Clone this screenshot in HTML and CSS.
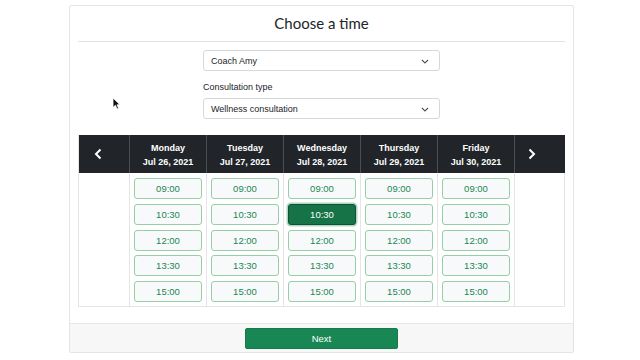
FILE: index.html
```html
<!DOCTYPE html>
<html>
<head>
<meta charset="utf-8">
<link rel="stylesheet" href="styles.css">
</head>
<body>
<div class="card">
  <div class="card-body">
    <h1 class="title">Choose a time</h1>
    <div class="form">
      <div class="select"><span>Coach Amy</span><svg class="chev" width="8" height="5" viewBox="0 0 8 5"><path d="M1 1 L4 4 L7 1" fill="none" stroke="#555" stroke-width="1.1"/></svg></div>
      <label class="label">Consultation type</label>
      <div class="select"><span>Wellness consultation</span><svg class="chev" width="8" height="5" viewBox="0 0 8 5"><path d="M1 1 L4 4 L7 1" fill="none" stroke="#555" stroke-width="1.1"/></svg></div>
    </div>
    <div class="cal">
      <div class="head nav"><svg width="8" height="12" viewBox="0 0 8 12"><path d="M6.5 1.5 L2 6 L6.5 10.5" fill="none" stroke="#fff" stroke-width="2"/></svg></div>
      <div class="head day"><b>Monday</b><b>Jul 26, 2021</b></div>
      <div class="head day"><b>Tuesday</b><b>Jul 27, 2021</b></div>
      <div class="head day"><b>Wednesday</b><b>Jul 28, 2021</b></div>
      <div class="head day"><b>Thursday</b><b>Jul 29, 2021</b></div>
      <div class="head day"><b>Friday</b><b>Jul 30, 2021</b></div>
      <div class="head nav next"><svg width="8" height="12" viewBox="0 0 8 12"><path d="M1.5 1.5 L6 6 L1.5 10.5" fill="none" stroke="#fff" stroke-width="2"/></svg></div>

      <div class="col empty"></div>
      <div class="col"><button class="slot">09:00</button><button class="slot">10:30</button><button class="slot">12:00</button><button class="slot">13:30</button><button class="slot">15:00</button></div>
      <div class="col"><button class="slot">09:00</button><button class="slot">10:30</button><button class="slot">12:00</button><button class="slot">13:30</button><button class="slot">15:00</button></div>
      <div class="col"><button class="slot">09:00</button><button class="slot active">10:30</button><button class="slot">12:00</button><button class="slot">13:30</button><button class="slot">15:00</button></div>
      <div class="col"><button class="slot">09:00</button><button class="slot">10:30</button><button class="slot">12:00</button><button class="slot">13:30</button><button class="slot">15:00</button></div>
      <div class="col"><button class="slot">09:00</button><button class="slot">10:30</button><button class="slot">12:00</button><button class="slot">13:30</button><button class="slot">15:00</button></div>
      <div class="col empty"></div>
    </div>
  </div>
  <div class="card-footer">
    <button class="next-btn">Next</button>
  </div>
</div>
<svg class="cursor" width="9" height="13" viewBox="0 0 9 13"><path d="M1 1 L1 10.5 L3.4 8.3 L5 12 L6.6 11.3 L5 7.8 L8 7.8 Z" fill="#111" stroke="#fff" stroke-width="0.8"/></svg>
</body>
</html>
```
FILE: styles.css
```css
* { box-sizing: border-box; }
body {
  margin: 0;
  background: #fff;
  font-family: "Liberation Sans", Arial, sans-serif;
  color: #212529;
  position: relative;
  width: 640px;
  height: 360px;
  overflow: hidden;
}
.card {
  margin: 5px 0 0 69px;
  width: 505px;
  border: 1px solid #e4e4e4;
  border-radius: 2px;
  background: #fff;
}
.card-body {
  padding: 0 8px 16px;
}
.title {
  margin: 0;
  height: 36px;
  line-height: 35px;
  border-bottom: 1px solid #e2e2e2;
  text-align: center;
  font-family: Lato, "Open Sans", sans-serif;
  font-weight: 400;
  font-size: 15px;
  color: #212529;
}
.form {
  width: 237px;
  margin: 8px auto 0;
  display: flex;
  flex-direction: column;
}
.select {
  height: 21px;
  border: 1px solid #d6d9dc;
  border-radius: 3px;
  padding: 0 10px 0 7px;
  display: flex;
  align-items: center;
  justify-content: space-between;
  font-size: 9px;
  color: #212529;
}
.chev { margin-top: 1px; }
.label {
  font-size: 9px;
  margin: 11px 0 5px;
  line-height: 11px;
}
.cal {
  margin-top: 16px;
  display: grid;
  grid-template-columns: 50px repeat(5, 77px) 51px;
  border-left: 1px solid #e3e5e7;
  border-right: 1px solid #e3e5e7;
  border-bottom: 1px solid #e3e5e7;
}
.head {
  height: 38px;
  background: #212529;
  color: #fff;
}
.day {
  border-left: 1.5px solid #4a4f54;
  display: flex;
  flex-direction: column;
  align-items: center;
  padding-top: 6px;
  font-size: 9px;
  line-height: 14px;
}
.nav {
  display: flex;
  align-items: center;
  justify-content: flex-start;
  padding-left: 15px;
}
.next { border-left: 1.5px solid #4a4f54; padding-left: 13px; }
.col {
  border-left: 1px solid #e3e5e7;
  padding: 5px 4px 4px;
  display: flex;
  flex-direction: column;
  gap: 4.75px;
}
.cal > .col.empty:nth-child(8) { border-left: none; }
.slot {
  height: 21px;
  width: 100%;
  border: 1px solid #96cfa6;
  border-radius: 3px;
  background: #f8f9fa;
  color: #198754;
  font-family: "Liberation Sans", Arial, sans-serif;
  font-size: 9.5px;
  padding: 0;
}
.slot.active {
  background: #157347;
  color: #fff;
  border-color: #0f5132;
  box-shadow: 0 0 0 1.5px rgba(25, 135, 84, 0.35);
}
.card-footer {
  border-top: 1px solid #e6e6e6;
  background: #f7f7f7;
  height: 29px;
  display: flex;
  justify-content: center;
  padding-top: 4px;
}
.next-btn {
  width: 153px;
  height: 21px;
  border: 1px solid #167a4c;
  border-radius: 2px;
  background: #198754;
  color: #fff;
  font-family: "Liberation Sans", Arial, sans-serif;
  font-size: 9.5px;
  padding: 0;
}
.cursor {
  position: absolute;
  left: 112px;
  top: 97px;
}
```
